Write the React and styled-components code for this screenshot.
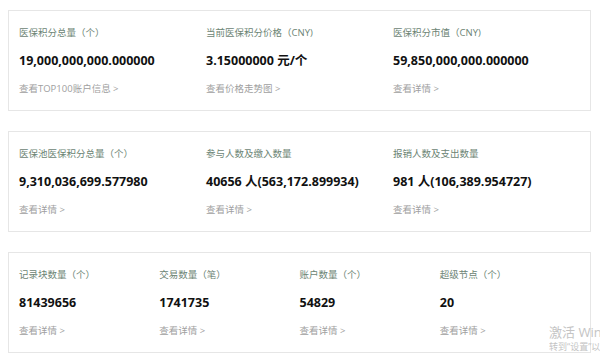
import React from 'react';
import styled, { createGlobalStyle } from 'styled-components';

const GlobalStyle = createGlobalStyle`
    html, body {
        margin: 0;
        padding: 0;
        background: #fff;
        overflow: hidden;
    }
    body {
        font-family: "Open Sans", "Noto Sans CJK SC", sans-serif;
        width: 600px;
        height: 362px;
    }
`;

const cards = [
    {
        cols: 3,
        items: [
            { label: '医保积分总量（个）', value: '19,000,000,000.000000', link: '查看TOP100账户信息 >' },
            { label: '当前医保积分价格（CNY)', value: '3.15000000 元/个', link: '查看价格走势图 >' },
            { label: '医保积分市值（CNY)', value: '59,850,000,000.000000', link: '查看详情 >' },
        ],
    },
    {
        cols: 3,
        items: [
            { label: '医保池医保积分总量（个）', value: '9,310,036,699.577980', link: '查看详情 >' },
            { label: '参与人数及缴入数量', value: '40656 人(563,172.899934)', link: '查看详情 >' },
            { label: '报销人数及支出数量', value: '981 人(106,389.954727)', link: '查看详情 >' },
        ],
    },
    {
        cols: 4,
        items: [
            { label: '记录块数量（个）', value: '81439656', link: '查看详情 >' },
            { label: '交易数量（笔）', value: '1741735', link: '查看详情 >' },
            { label: '账户数量（个）', value: '54829', link: '查看详情 >' },
            { label: '超级节点（个）', value: '20', link: '查看详情 >' },
        ],
    },
];

export default function App() {
    return (
        <Page>
            <GlobalStyle />
            {cards.map((card, i) => (
                <Card key={i} $cols={card.cols}>
                    {card.items.map((item) => (
                        <Stat key={item.label}>
                            <Label>{item.label}</Label>
                            <Value>{item.value}</Value>
                            <More href="#">{item.link}</More>
                        </Stat>
                    ))}
                </Card>
            ))}
            {/* windows activation watermark, cut by the window edge */}
            <Watermark>
                <WmTitle>激活 Windows</WmTitle>
                <WmSub>转到“设置”以激活 Windows。</WmSub>
            </Watermark>
        </Page>
    );
}

const Page = styled.div`
    position: relative;
    height: 362px;
    padding: 10px 9px 0 8px;
    box-sizing: border-box;
    display: flex;
    flex-direction: column;
    gap: 20px;
    overflow: hidden;
`;

// Stat card
const Card = styled.div`
    display: grid;
    grid-template-columns: repeat(${(p) => p.$cols}, 1fr);
    padding: 15px 10px 14px;
    border: 1px solid #e6e6e6;
    background: #fff;
`;

const Stat = styled.div`
    display: flex;
    flex-direction: column;
    min-width: 0;
`;

const Label = styled.div`
    font-size: 9.5px;
    line-height: 14px;
    color: #6c8474;
    white-space: nowrap;
`;

const Value = styled.div`
    margin-top: 12px;
    font-size: 12.5px;
    line-height: 18px;
    font-weight: 700;
    color: #111;
    white-space: nowrap;
`;

const More = styled.a`
    margin-top: 12px;
    font-size: 9.5px;
    line-height: 14px;
    color: #a0a0a0;
    text-decoration: none;
    white-space: nowrap;
`;

const Watermark = styled.div`
    position: absolute;
    left: 549px;
    top: 323px;
    width: 51px;
    overflow: hidden;
    white-space: nowrap;
    color: #c4c4c4;
    pointer-events: none;
`;

const WmTitle = styled.div`
    font-size: 13px;
    line-height: 18px;
`;

const WmSub = styled.div`
    font-size: 9px;
    line-height: 12px;
`;
